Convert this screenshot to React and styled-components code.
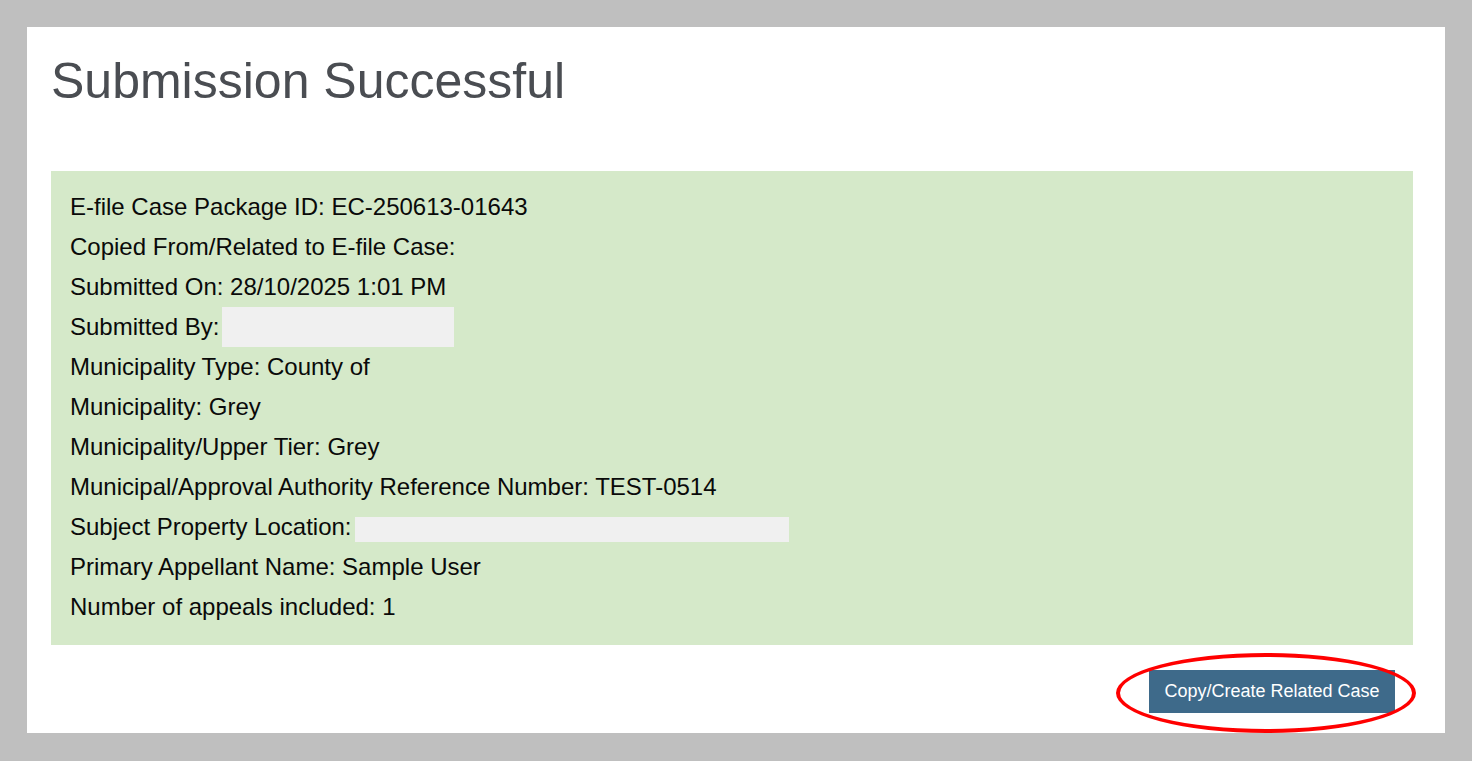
import React from "react";
import styled, { createGlobalStyle } from "styled-components";

const Global = createGlobalStyle`
  html, body { margin: 0; padding: 0; }
  body {
    background: #bfbfbf;
    font-family: "Liberation Sans", Arial, sans-serif;
  }
`;

const Frame = styled.div`
  padding: 27px 27px 28px 27px;
`;

const Panel = styled.main`
  background: #ffffff;
  height: 706px;
  box-sizing: border-box;
  padding: 0 32px 0 24px;
  display: flex;
  flex-direction: column;
`;

const Title = styled.h1`
  margin: 0;
  padding-top: 25px;
  height: 144px;
  box-sizing: border-box;
  font-size: 50px;
  line-height: 58px;
  font-weight: 400;
  color: #4a4d52;
`;

const InfoBox = styled.section`
  background: #d5e9c9;
  padding: 16px 19px 18px 19px;
  display: flex;
  flex-direction: column;
`;

const Line = styled.div`
  height: 40px;
  display: flex;
  align-items: center;
  font-size: 24px;
  color: #0a0a0a;
  white-space: nowrap;
`;

const Redacted = styled.span`
  display: inline-block;
  background: #f0f0f0;
  width: ${(p) => p.$w}px;
  height: ${(p) => p.$h}px;
  margin-left: ${(p) => p.$ml || 4}px;
  margin-top: ${(p) => p.$mt || 0}px;
`;

const Actions = styled.div`
  display: flex;
  justify-content: flex-end;
  padding: 25px 18px 0 0;
`;

const ButtonWrap = styled.div`
  position: relative;
  display: flex;
`;

const Button = styled.button`
  background: #3e6a8a;
  color: #ffffff;
  border: none;
  border-radius: 0;
  width: 246px;
  height: 43px;
  font-family: "Liberation Sans", Arial, sans-serif;
  font-size: 18px;
  padding: 0;
  cursor: pointer;
`;

const Highlight = styled.span`
  position: absolute;
  left: -33px;
  top: -17px;
  width: 300px;
  height: 80px;
  box-sizing: border-box;
  border: 4px solid #ff0000;
  border-radius: 50%;
  pointer-events: none;
`;

export default function App() {
  return (
    <>
      <Global />
      <Frame>
        <Panel>
          <Title>Submission Successful</Title>
          <InfoBox>
            <Line>E-file Case Package ID: EC-250613-01643</Line>
            <Line>Copied From/Related to E-file Case:</Line>
            <Line>Submitted On: 28/10/2025 1:01 PM</Line>
            <Line>
              Submitted By:
              <Redacted $w={232} $h={40} $ml={3} />
            </Line>
            <Line>Municipality Type: County of</Line>
            <Line>Municipality: Grey</Line>
            <Line>Municipality/Upper Tier: Grey</Line>
            <Line>Municipal/Approval Authority Reference Number: TEST-0514</Line>
            <Line>
              Subject Property Location:
              <Redacted $w={434} $h={25} $ml={3} $mt={4} />
            </Line>
            <Line>Primary Appellant Name: Sample User</Line>
            <Line>Number of appeals included: 1</Line>
          </InfoBox>
          <Actions>
            <ButtonWrap>
              <Button>Copy/Create Related Case</Button>
              <Highlight />
            </ButtonWrap>
          </Actions>
        </Panel>
      </Frame>
    </>
  );
}
